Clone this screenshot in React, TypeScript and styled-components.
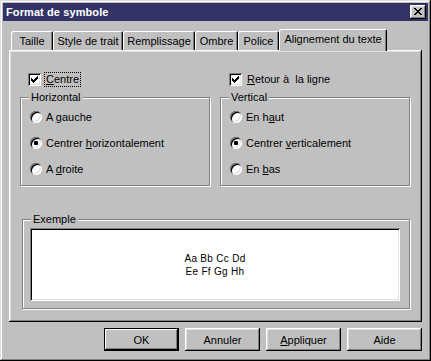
import React from 'react';
import styled, { createGlobalStyle, css } from 'styled-components';

const GlobalStyle = createGlobalStyle`
  html, body {
    margin: 0;
    padding: 0;
    background: #c0c0c0;
  }
  body {
    font-family: "Liberation Sans", Arial, sans-serif;
    font-size: 11px;
    color: #000;
  }
`;

const raised = css`
  box-shadow: inset -1px -1px #000, inset 1px 1px #fff, inset -2px -2px #808080, inset 2px 2px #dfdfdf;
`;

const sunken = css`
  box-shadow: inset 1px 1px #808080, inset -1px -1px #fff, inset 2px 2px #000, inset -2px -2px #dfdfdf;
`;

const Window = styled.div`
  box-sizing: border-box;
  width: 431px;
  height: 361px;
  padding: 3px;
  background: #c0c0c0;
  box-shadow: inset -1px -1px #000, inset 1px 1px #dfdfdf, inset -2px -2px #808080, inset 2px 2px #fff;
  display: flex;
  flex-direction: column;
`;

const TitleBar = styled.div`
  height: 18px;
  background: #333366;
  display: flex;
  align-items: center;
  justify-content: space-between;
  padding: 0 2px 0 3px;
`;

const Title = styled.span`
  color: #fff;
  font-weight: bold;
  font-size: 11px;
  letter-spacing: 0.1px;
`;

const CloseButton = styled.div`
  width: 16px;
  height: 14px;
  background: #c0c0c0;
  display: flex;
  align-items: center;
  justify-content: center;
  ${raised};
  svg { display: block; margin: 0 1px 1px 0; }
`;

const Body = styled.div`
  padding: 8px 6px 0 6px;
  display: flex;
  flex-direction: column;
`;

const TabStrip = styled.div`
  display: flex;
  align-items: flex-end;
  height: 21px;
  padding-left: 2px;
`;

const Tab = styled.div<{ $w: number; $active?: boolean }>`
  box-sizing: border-box;
  width: ${(p) => p.$w}px;
  height: ${(p) => (p.$active ? 22 : 19)}px;
  margin-bottom: ${(p) => (p.$active ? -1 : 0)}px;
  position: relative;
  z-index: ${(p) => (p.$active ? 1 : 0)};
  background: #c0c0c0;
  border-radius: 2px 2px 0 0;
  box-shadow: inset 1px 1px #fff, inset -1px 0 #000, inset -2px 0 #808080;
  display: flex;
  align-items: ${(p) => (p.$active ? 'flex-start' : 'center')};
  padding-top: ${(p) => (p.$active ? 4 : 1)}px;
  justify-content: center;
  white-space: nowrap;
`;

const Panel = styled.div`
  box-sizing: border-box;
  height: 272px;
  padding: 23px 12px 0 11px;
  background: #c0c0c0;
  ${raised};
`;

const TwoColumns = styled.div`
  display: grid;
  grid-template-columns: 190px 190px;
  column-gap: 10px;
`;

const CheckRow = styled.div<{ $indent: number }>`
  display: flex;
  align-items: center;
  height: 13px;
  padding-left: ${(p) => p.$indent}px;
`;

const CheckBox = styled.div`
  box-sizing: border-box;
  width: 13px;
  height: 13px;
  background: #fff;
  display: flex;
  align-items: center;
  justify-content: center;
  ${sunken};
  svg { display: block; }
`;

const Label = styled.span<{ $focused?: boolean }>`
  margin-left: 3px;
  padding: 0 1px;
  line-height: 13px;
  border: 1px dotted ${(p) => (p.$focused ? '#000' : 'transparent')};
  white-space: nowrap;
`;

const Key = styled.u`
  text-decoration: underline;
  text-underline-offset: 1px;
`;

const Group = styled.fieldset<{ $inset?: number }>`
  margin: 0 0 0 ${(p) => p.$inset ?? 0}px;
  padding: 0 0 3px 0;
  border: 1px solid #808080;
  box-shadow: inset 1px 1px #fff, 1px 1px #fff;
  min-width: 0;
`;

const Legend = styled.legend`
  margin-left: 8px;
  padding: 0 2px;
  line-height: 13px;
  background: #c0c0c0;
`;

const Groups = styled(TwoColumns)`
  margin-top: 5px;
`;

const RadioRow = styled.div`
  display: flex;
  align-items: center;
  height: 26px;
  padding-left: 9px;
`;

const Radio = styled.div<{ $checked?: boolean }>`
  box-sizing: border-box;
  width: 12px;
  height: 12px;
  border-radius: 50%;
  background: #fff;
  margin-right: 4px;
  display: flex;
  align-items: center;
  justify-content: center;
  ${sunken};
  &::after {
    content: '';
    width: 4px;
    height: 4px;
    border-radius: 1px;
    background: ${(p) => (p.$checked ? '#000' : 'transparent')};
  }
`;

const ExampleGroup = styled(Group)`
  margin-top: 27px;
  width: 388px;
  box-sizing: border-box;
  padding: 2px 0 7px 0;
`;

const Preview = styled.div`
  box-sizing: border-box;
  width: 370px;
  height: 73px;
  margin-left: 7px;
  background: #fff;
  ${sunken};
  display: flex;
  flex-direction: column;
  align-items: center;
  justify-content: center;
  font-size: 10px;
  line-height: 13px;
  letter-spacing: 0.3px;
  padding-top: 1px;
`;

const ButtonRow = styled.div`
  display: flex;
  justify-content: flex-end;
  gap: 6px;
  margin-top: 6px;
`;

const Button = styled.div<{ $default?: boolean }>`
  box-sizing: border-box;
  width: 75px;
  height: 23px;
  background: #c0c0c0;
  display: flex;
  align-items: center;
  justify-content: center;
  ${(p) =>
    p.$default
      ? css`
          box-shadow: inset 0 0 0 1px #000, inset -2px -2px #000, inset 2px 2px #fff, inset -3px -3px #808080;
        `
      : raised};
`;

const CloseGlyph = () => (
  <svg width="8" height="7" viewBox="0 0 8 7" shapeRendering="crispEdges">
    <path
      d="M0 0h2v1H0zM6 0h2v1H6zM1 1h2v1H1zM5 1h2v1H5zM2 2h4v1H2zM3 3h2v1H3zM2 4h4v1H2zM1 5h2v1H1zM5 5h2v1H5zM0 6h2v1H0zM6 6h2v1H6z"
      fill="#000"
    />
  </svg>
);

const CheckGlyph = () => (
  <svg width="7" height="7" viewBox="0 0 7 7" shapeRendering="crispEdges">
    <path d="M6 0h1v3H6zM5 1h1v3H5zM4 2h1v3H4zM3 3h1v3H3zM2 4h1v3H2zM1 3h1v3H1zM0 2h1v3H0z" fill="#000" />
  </svg>
);

const tabs = [
  { label: 'Taille', w: 42 },
  { label: 'Style de trait', w: 70 },
  { label: 'Remplissage', w: 72 },
  { label: 'Ombre', w: 43 },
  { label: 'Police', w: 41 },
  { label: 'Alignement du texte', w: 108, active: true },
];

type Option = { before: string; key: string; after: string; checked?: boolean };

const horizontal: Option[] = [
  { before: 'A ', key: 'g', after: 'auche' },
  { before: 'Centrer ', key: 'h', after: 'orizontalement', checked: true },
  { before: 'A ', key: 'd', after: 'roite' },
];

const vertical: Option[] = [
  { before: 'En h', key: 'a', after: 'ut' },
  { before: 'Centrer ', key: 'v', after: 'erticalement', checked: true },
  { before: 'En ', key: 'b', after: 'as' },
];

const RadioGroup = ({ title, options }: { title: string; options: Option[] }) => (
  <Group>
    <Legend>{title}</Legend>
    {options.map((o) => (
      <RadioRow key={o.before + o.key}>
        <Radio $checked={o.checked} />
        <span>
          {o.before}
          <Key>{o.key}</Key>
          {o.after}
        </span>
      </RadioRow>
    ))}
  </Group>
);

export default function App() {
  return (
    <>
      <GlobalStyle />
      <Window>
        <TitleBar>
          <Title>Format de symbole</Title>
          <CloseButton>
            <CloseGlyph />
          </CloseButton>
        </TitleBar>
        <Body>
          <TabStrip>
            {tabs.map((t) => (
              <Tab key={t.label} $w={t.w} $active={t.active}>
                {t.label}
              </Tab>
            ))}
          </TabStrip>
          <Panel>
            <TwoColumns>
              <CheckRow $indent={8}>
                <CheckBox>
                  <CheckGlyph />
                </CheckBox>
                <Label $focused>
                  <Key>C</Key>entre
                </Label>
              </CheckRow>
              <CheckRow $indent={9}>
                <CheckBox>
                  <CheckGlyph />
                </CheckBox>
                <Label>
                  <Key>R</Key>etour à&nbsp; la ligne
                </Label>
              </CheckRow>
            </TwoColumns>
            <Groups>
              <RadioGroup title="Horizontal" options={horizontal} />
              <RadioGroup title="Vertical" options={vertical} />
            </Groups>
            <ExampleGroup $inset={2}>
              <Legend>Exemple</Legend>
              <Preview>
                <span>Aa Bb Cc Dd</span>
                <span>Ee Ff Gg Hh</span>
              </Preview>
            </ExampleGroup>
          </Panel>
          <ButtonRow>
            <Button $default>OK</Button>
            <Button>Annuler</Button>
            <Button>
              <span>
                <Key>A</Key>ppliquer
              </span>
            </Button>
            <Button>Aide</Button>
          </ButtonRow>
        </Body>
      </Window>
    </>
  );
}
